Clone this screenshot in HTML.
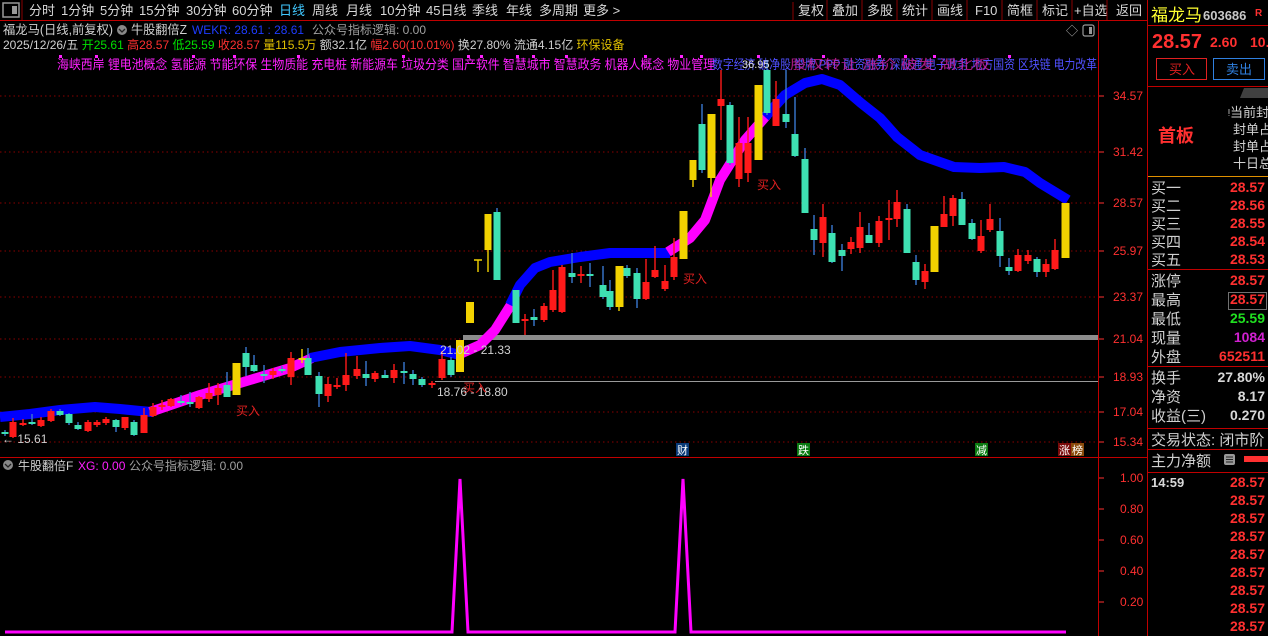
<!DOCTYPE html>
<html><head><meta charset="utf-8"><style>
html,body{margin:0;padding:0;background:#000;width:1268px;height:636px;overflow:hidden}
svg{display:block;font-family:"Liberation Sans","Noto Sans CJK SC",sans-serif}
.r{fill:#ff1a1a}.c{fill:#3ee0b2}.y{fill:#f2d200}
.rw{stroke:#ff1a1a;stroke-width:1.4}.cw{stroke:#3a78d0;stroke-width:1.4}.yw{stroke:#f2d200;stroke-width:1.4}
.g{stroke:#8a0000;stroke-width:1;stroke-dasharray:1.5 3}
.ax{fill:#ff3030;font-size:12px}
.tb{fill:#d8d8d8;font-size:13px}
.rp{font-size:15px;fill:#d0d0d0}
.rv{font-size:14px;font-weight:bold;fill:#ff3030;text-anchor:end}
</style></head><body>
<svg width="1268" height="636" viewBox="0 0 1268 636" xmlns="http://www.w3.org/2000/svg">
<rect x="0" y="0" width="1268" height="20" fill="#000"/>
<rect x="3" y="3" width="16" height="14" fill="none" stroke="#999" stroke-width="1.5"/><rect x="12" y="6" width="5" height="8" fill="#999"/>
<line x1="22" y1="0" x2="22" y2="20" stroke="#8a0000"/>
<g class="tb">
<text x="29" y="15">分时</text><text x="61" y="15">1分钟</text><text x="100" y="15">5分钟</text><text x="139" y="15">15分钟</text><text x="186" y="15">30分钟</text><text x="232" y="15">60分钟</text><text x="279" y="15" fill="#40c8ff">日线</text><text x="312" y="15">周线</text><text x="346" y="15">月线</text><text x="380" y="15">10分钟</text><text x="426" y="15">45日线</text><text x="472" y="15">季线</text><text x="506" y="15">年线</text><text x="539" y="15">多周期</text><text x="583" y="15">更多 &gt;</text>
<text x="798" y="15">复权</text><text x="832" y="15">叠加</text><text x="867" y="15">多股</text><text x="902" y="15">统计</text><text x="937" y="15">画线</text><text x="975" y="15">F10</text><text x="1007" y="15">简框</text><text x="1042" y="15">标记</text><text x="1074" y="15">+自选</text><text x="1116" y="15">返回</text>
</g>
<g stroke="#8a0000"><line x1="793" y1="2" x2="793" y2="20"/><line x1="827" y1="0" x2="827" y2="20"/><line x1="862" y1="0" x2="862" y2="20"/><line x1="897" y1="0" x2="897" y2="20"/><line x1="932" y1="0" x2="932" y2="20"/><line x1="967" y1="0" x2="967" y2="20"/><line x1="1002" y1="0" x2="1002" y2="20"/><line x1="1037" y1="0" x2="1037" y2="20"/><line x1="1072" y1="0" x2="1072" y2="20"/><line x1="1107" y1="0" x2="1107" y2="20"/></g>
<line x1="0" y1="20.5" x2="1148" y2="20.5" stroke="#c00000"/>
<line x1="1098.5" y1="20" x2="1098.5" y2="636" stroke="#c00000"/>
<line x1="1147.5" y1="0" x2="1147.5" y2="636" stroke="#c00000"/>
<line x1="0" y1="457.5" x2="1148" y2="457.5" stroke="#c00000"/>
<g class="g"><line x1="0" y1="96" x2="1097" y2="96"/><line x1="0" y1="152" x2="1097" y2="152"/><line x1="0" y1="203" x2="1097" y2="203"/><line x1="0" y1="251" x2="1097" y2="251"/><line x1="0" y1="297" x2="1097" y2="297"/><line x1="0" y1="339" x2="1097" y2="339"/><line x1="0" y1="377" x2="1097" y2="377"/><line x1="0" y1="412" x2="1097" y2="412"/><line x1="0" y1="442" x2="1097" y2="442"/></g>
<g stroke="#ff3030"><line x1="1099" y1="96" x2="1104" y2="96"/><line x1="1099" y1="152" x2="1104" y2="152"/><line x1="1099" y1="203" x2="1104" y2="203"/><line x1="1099" y1="251" x2="1104" y2="251"/><line x1="1099" y1="297" x2="1104" y2="297"/><line x1="1099" y1="339" x2="1104" y2="339"/><line x1="1099" y1="377" x2="1104" y2="377"/><line x1="1099" y1="412" x2="1104" y2="412"/><line x1="1099" y1="442" x2="1104" y2="442"/>
<line x1="1099" y1="478" x2="1104" y2="478"/><line x1="1099" y1="509" x2="1104" y2="509"/><line x1="1099" y1="540" x2="1104" y2="540"/><line x1="1099" y1="571" x2="1104" y2="571"/><line x1="1099" y1="602" x2="1104" y2="602"/></g>
<g class="ax"><text x="1113" y="100">34.57</text><text x="1113" y="156">31.42</text><text x="1113" y="207">28.57</text><text x="1113" y="255">25.97</text><text x="1113" y="301">23.37</text><text x="1113" y="343">21.04</text><text x="1113" y="381">18.93</text><text x="1113" y="416">17.04</text><text x="1113" y="446">15.34</text>
<text x="1120" y="482">1.00</text><text x="1120" y="513">0.80</text><text x="1120" y="544">0.60</text><text x="1120" y="575">0.40</text><text x="1120" y="606">0.20</text></g>
<text x="3" y="34" font-size="12.5" fill="#d0d0d0" textLength="110" lengthAdjust="spacingAndGlyphs">福龙马(日线,前复权)</text>
<circle cx="122" cy="30" r="5" fill="#888"/><path d="M119 29 l3 3 l3 -3" stroke="#222" fill="none" stroke-width="1.3"/>
<text x="131" y="34" font-size="12.5" fill="#d0d0d0" textLength="56" lengthAdjust="spacingAndGlyphs">牛股翻倍Z</text>
<text x="192" y="34" font-size="12" fill="#1e3cff" textLength="112" lengthAdjust="spacingAndGlyphs">WEKR: 28.61 : 28.61</text>
<text x="312" y="34" font-size="12" fill="#a0a0a0">公众号指标逻辑: 0.00</text>
<text x="1066" y="35" font-size="12" fill="#aaa">◇</text>
<rect x="1083" y="25" width="11" height="11" rx="2" fill="none" stroke="#999" stroke-width="1.2"/><rect x="1089" y="27" width="3" height="7" fill="#999"/>
<text y="49" font-size="12"><tspan x="3" fill="#d0d0d0">2025/12/26/五 </tspan><tspan fill="#00e000">开25.61 </tspan><tspan fill="#ff3030">高28.57 </tspan><tspan fill="#00e000">低25.59 </tspan><tspan fill="#ff3030">收28.57 </tspan><tspan fill="#e0c000">量115.5万 </tspan><tspan fill="#d0d0d0">额32.1亿 </tspan><tspan fill="#ff3030">幅2.60(10.01%) </tspan><tspan fill="#d0d0d0">换27.80% 流通4.15亿 </tspan><tspan fill="#e0c000">环保设备</tspan></text>
<text x="57" y="69" font-size="13" fill="#ff20ff" textLength="658" lengthAdjust="spacingAndGlyphs">海峡西岸 锂电池概念 氢能源 节能环保 生物质能 充电桩 新能源车 垃圾分类 国产软件 智慧城市 智慧政务 机器人概念 物业管理</text>
<text x="712" y="69" font-size="13" fill="#5050ff" textLength="385" lengthAdjust="spacingAndGlyphs">数字经济 破净股 举牌 PPP 融资融券 深股通 电子政务 地方国资 区块链 电力改革</text>
<text x="790" y="69" font-size="13" fill="#d020a0" opacity="0.8" textLength="200" lengthAdjust="spacingAndGlyphs">股权转让 涨价 破发 湖北板</text>
<g fill="#ff20ff"><rect x="59" y="55" width="3" height="3"/><rect x="95" y="55" width="3" height="3"/><rect x="192" y="55" width="3" height="3"/><rect x="233" y="55" width="3" height="3"/><rect x="297" y="55" width="3" height="3"/><rect x="402" y="55" width="3" height="3"/><rect x="467" y="55" width="3" height="3"/><rect x="480" y="55" width="3" height="3"/><rect x="516" y="55" width="3" height="3"/><rect x="532" y="55" width="3" height="3"/><rect x="565" y="55" width="3" height="3"/><rect x="644" y="55" width="3" height="3"/><rect x="680" y="55" width="3" height="3"/><rect x="700" y="55" width="3" height="3"/><rect x="757" y="55" width="3" height="3"/><rect x="822" y="55" width="3" height="3"/><rect x="878" y="55" width="3" height="3"/><rect x="904" y="55" width="3" height="3"/><rect x="933" y="55" width="3" height="3"/><rect x="1008" y="55" width="3" height="3"/></g>
<rect x="463" y="335" width="635" height="5" fill="#8c8c8c"/>
<line x1="435" y1="381.5" x2="1098" y2="381.5" stroke="#9a9a9a"/>
<g fill="none" stroke-width="10" stroke-linejoin="round" stroke-linecap="butt">
<polyline stroke="#0000ff" points="0,417 30,414 60,410 95,407 120,409 140,411 152,412"/>
<polyline stroke="#ff00ff" points="150,412 200,395 250,380 290,368 312,358"/>
<polyline stroke="#0000ff" points="310,358 340,352 380,348 410,346 440,350 464,356"/>
<polyline stroke="#ff00ff" points="462,353 480,345 495,330 512,303"/>
<polyline stroke="#0000ff" points="510,305 520,285 535,268 550,262 580,257 610,253 670,253"/>
<polyline stroke="#ff00ff" points="668,252 690,238 705,220 720,180 745,140 767,115"/>
<polyline stroke="#0000ff" points="765,117 785,95 805,83 822,79 840,85 861,103 880,118 897,137 920,155 954,167 980,168 1004,167 1025,172 1040,183 1068,200"/>
</g>
<path class="cw" d="M5 430V436M32 414V425M60 409V416M69 413V425M78 422V430M116 419V432M134 420V436M181 395V405M190 392V407M227 372V397M246 347V376M254 355V372M264 365V383M282 366V373M308 348V375M319 372V407M366 361V386M385 370V378M404 362V384M413 370V385M422 377V387M451 357V377M497 208V280M516 290V323M534 309V326M572 253V283M590 263V287M603 266V299M610 280V310M627 265V278M637 268V308M702 104V173M730 102V165M767 60V115M786 70V128M795 97V157M805 148V213M814 215V255M832 225V263M842 244V271M869 223V243M907 204V253M916 255V285M962 192V225M972 219V240M1000 218V267M1009 258V275M1037 257V277"/>
<path class="rw" d="M13 418V438M23 419V426M41 417V427M51 409V422M88 420V432M97 420V427M106 417V425M125 417V430M144 408V433M153 403V417M162 400V410M171 398V407M199 396V409M209 383V402M218 383V405M273 368V379M291 352V385M328 377V402M337 378V389M346 353V391M357 356V379M375 371V382M394 364V383M432 381V388M442 351V380M525 314V335M544 303V322M553 270V312M562 265V313M581 266V283M646 259V300M655 246V278M665 265V291M674 238V280M721 70V140M739 117V187M748 117V182M776 81V126M823 204V257M851 237V254M860 212V253M879 216V247M889 200V240M897 190V227M925 264V289M944 196V227M953 195V226M981 220V253M990 204V232M1018 249V272M1028 250V264M1046 259V277M1055 239V270"/>
<path class="yw" d="M302 349V363M488 214V272M619 266V311M693 160V187M711 114V197M474 260H482M478 260V272"/>
<g class="c"><rect x="1.5" y="432" width="7" height="2"/><rect x="28.5" y="422" width="7" height="2"/><rect x="56.5" y="411" width="7" height="4"/><rect x="65.5" y="414" width="7" height="9"/><rect x="74.5" y="425" width="7" height="4"/><rect x="112.5" y="420" width="7" height="7"/><rect x="130.5" y="422" width="7" height="13"/><rect x="177.5" y="401" width="7" height="2"/><rect x="186.5" y="402" width="7" height="2"/><rect x="223.5" y="385" width="7" height="12"/><rect x="242.5" y="353" width="7" height="14"/><rect x="250.5" y="365" width="7" height="6"/><rect x="260.5" y="374" width="7" height="2"/><rect x="278.5" y="369" width="7" height="2"/><rect x="304.5" y="358" width="7" height="17"/><rect x="315.5" y="376" width="7" height="18"/><rect x="362.5" y="374" width="7" height="4"/><rect x="381.5" y="375" width="7" height="3"/><rect x="400.5" y="371" width="7" height="2"/><rect x="409.5" y="374" width="7" height="5"/><rect x="418.5" y="379" width="7" height="6"/><rect x="447.5" y="360" width="7" height="15"/><rect x="493.5" y="212" width="7" height="68"/><rect x="512.5" y="290" width="7" height="33"/><rect x="530.5" y="317" width="7" height="3"/><rect x="568.5" y="273" width="7" height="4"/><rect x="586.5" y="274" width="7" height="2"/><rect x="599.5" y="285" width="7" height="12"/><rect x="606.5" y="291" width="7" height="16"/><rect x="623.5" y="268" width="7" height="8"/><rect x="633.5" y="273" width="7" height="26"/><rect x="698.5" y="124" width="7" height="46"/><rect x="726.5" y="105" width="7" height="58"/><rect x="763.5" y="70" width="7" height="43"/><rect x="782.5" y="114" width="7" height="8"/><rect x="791.5" y="134" width="7" height="22"/><rect x="801.5" y="159" width="7" height="54"/><rect x="810.5" y="229" width="7" height="11"/><rect x="828.5" y="233" width="7" height="29"/><rect x="838.5" y="250" width="7" height="6"/><rect x="865.5" y="235" width="7" height="8"/><rect x="903.5" y="209" width="7" height="44"/><rect x="912.5" y="262" width="7" height="18"/><rect x="958.5" y="199" width="7" height="26"/><rect x="968.5" y="223" width="7" height="16"/><rect x="996.5" y="231" width="7" height="25"/><rect x="1005.5" y="267" width="7" height="4"/><rect x="1033.5" y="259" width="7" height="13"/></g>
<g class="r"><rect x="9.5" y="422" width="7" height="15"/><rect x="19.5" y="423" width="7" height="2"/><rect x="37.5" y="420" width="7" height="6"/><rect x="47.5" y="411" width="7" height="10"/><rect x="84.5" y="422" width="7" height="9"/><rect x="93.5" y="422" width="7" height="3"/><rect x="102.5" y="419" width="7" height="4"/><rect x="121.5" y="417" width="7" height="11"/><rect x="140.5" y="415" width="7" height="18"/><rect x="149.5" y="407" width="7" height="9"/><rect x="158.5" y="405" width="7" height="2"/><rect x="167.5" y="399" width="7" height="7"/><rect x="195.5" y="397" width="7" height="11"/><rect x="205.5" y="393" width="7" height="6"/><rect x="214.5" y="388" width="7" height="7"/><rect x="269.5" y="371" width="7" height="4"/><rect x="287.5" y="358" width="7" height="19"/><rect x="324.5" y="384" width="7" height="12"/><rect x="333.5" y="385" width="7" height="2"/><rect x="342.5" y="375" width="7" height="10"/><rect x="353.5" y="369" width="7" height="7"/><rect x="371.5" y="373" width="7" height="6"/><rect x="390.5" y="370" width="7" height="8"/><rect x="428.5" y="383" width="7" height="2"/><rect x="438.5" y="359" width="7" height="19"/><rect x="521.5" y="319" width="7" height="2"/><rect x="540.5" y="306" width="7" height="14"/><rect x="549.5" y="290" width="7" height="20"/><rect x="558.5" y="267" width="7" height="45"/><rect x="577.5" y="274" width="7" height="2"/><rect x="642.5" y="282" width="7" height="17"/><rect x="651.5" y="270" width="7" height="7"/><rect x="661.5" y="281" width="7" height="8"/><rect x="670.5" y="257" width="7" height="20"/><rect x="717.5" y="99" width="7" height="7"/><rect x="735.5" y="143" width="7" height="36"/><rect x="744.5" y="143" width="7" height="30"/><rect x="772.5" y="99" width="7" height="27"/><rect x="819.5" y="217" width="7" height="26"/><rect x="847.5" y="242" width="7" height="7"/><rect x="856.5" y="227" width="7" height="21"/><rect x="875.5" y="221" width="7" height="22"/><rect x="885.5" y="218" width="7" height="2"/><rect x="893.5" y="202" width="7" height="17"/><rect x="921.5" y="271" width="7" height="11"/><rect x="940.5" y="214" width="7" height="13"/><rect x="949.5" y="198" width="7" height="18"/><rect x="977.5" y="236" width="7" height="15"/><rect x="986.5" y="219" width="7" height="11"/><rect x="1014.5" y="255" width="7" height="16"/><rect x="1024.5" y="255" width="7" height="6"/><rect x="1042.5" y="264" width="7" height="8"/><rect x="1051.5" y="250" width="7" height="19"/></g>
<g class="y"><rect x="232.5" y="363" width="8" height="32"/><rect x="298.5" y="358" width="7" height="2"/><rect x="456" y="340" width="8" height="32"/><rect x="466" y="302" width="8" height="21"/><rect x="484.5" y="214" width="7" height="36"/><rect x="615.5" y="266" width="8" height="41"/><rect x="679.5" y="211" width="8" height="48"/><rect x="689.5" y="160" width="7" height="20"/><rect x="707.5" y="114" width="8" height="64"/><rect x="754.5" y="85" width="8" height="75"/><rect x="930.5" y="226" width="8" height="46"/><rect x="1061.5" y="203" width="8" height="55"/></g>
<text x="236" y="415" font-size="12" fill="#e02020">买入</text>
<text x="683" y="283" font-size="12" fill="#e02020">买入</text>
<text x="757" y="189" font-size="12" fill="#e02020">买入</text>
<text x="463" y="392" font-size="12" fill="#e02020">买入</text>
<text x="440" y="354" font-size="12" fill="#d0d0d0">21.02 - 21.33</text>
<text x="437" y="396" font-size="12" fill="#d0d0d0">18.76 - 18.80</text>
<text x="2" y="443" font-size="12" fill="#d0d0d0">← 15.61</text>
<text x="742" y="68" font-size="11" fill="#e0e0e0">36.95</text>
<rect x="676" y="443" width="13" height="13" fill="#0a3a78"/><text x="677" y="454" font-size="11" fill="#fff">财</text>
<rect x="797" y="443" width="13" height="13" fill="#0a7a10"/><text x="798" y="454" font-size="11" fill="#fff">跌</text>
<rect x="975" y="443" width="13" height="13" fill="#0a7a10"/><text x="976" y="454" font-size="11" fill="#fff">减</text>
<rect x="1058" y="443" width="13" height="13" fill="#7a0a0a"/><text x="1059" y="454" font-size="11" fill="#fff">涨</text>
<rect x="1071" y="443" width="13" height="13" fill="#8a4a0a"/><text x="1072" y="454" font-size="11" fill="#fff">榜</text>
<circle cx="8" cy="465" r="5" fill="#888"/><path d="M5 464 l3 3 l3 -3" stroke="#222" fill="none" stroke-width="1.3"/>
<text x="18" y="470" font-size="12" fill="#d0d0d0">牛股翻倍F</text>
<text x="78" y="470" font-size="12" fill="#ff20ff">XG: 0.00</text>
<text x="129" y="470" font-size="12" fill="#a0a0a0">公众号指标逻辑: 0.00</text>
<polyline fill="none" stroke="#ff00ff" stroke-width="3" points="5,632 452,632 460,479 468,632 675,632 683,479 691,632 1066,632"/>
<text x="1151" y="21" font-size="17" fill="#ffff30">福龙马</text>
<text x="1203" y="20" font-size="13" fill="#c8c8c8" font-weight="bold">603686</text>
<text x="1255" y="16" font-size="10" fill="#ff3030" font-weight="bold">R</text>
<line x1="1148" y1="25.5" x2="1268" y2="25.5" stroke="#c00000"/>
<text x="1152" y="48" font-size="20" font-weight="bold" fill="#ff3030">28.57</text>
<text x="1210" y="47" font-size="14" font-weight="bold" fill="#ff3030">2.60</text>
<text x="1250" y="47" font-size="14" font-weight="bold" fill="#ff3030">10.0</text>
<rect x="1156.5" y="58.5" width="50" height="21" fill="none" stroke="#e02020"/><text x="1169" y="74" font-size="13" fill="#e02020">买入</text>
<rect x="1213.5" y="58.5" width="51" height="21" fill="none" stroke="#3080e0"/><text x="1226" y="74" font-size="13" fill="#3080e0">卖出</text>
<line x1="1148" y1="86.5" x2="1268" y2="86.5" stroke="#c00000"/>
<text x="1158" y="142" font-size="18" font-weight="bold" fill="#ff3030">首板</text>
<text x="1228" y="117" font-size="13" fill="#d0d0d0">ᵎ当前封</text>
<text x="1233" y="134" font-size="13" fill="#d0d0d0">封单占</text>
<text x="1233" y="151" font-size="13" fill="#d0d0d0">封单占</text>
<text x="1233" y="168" font-size="13" fill="#d0d0d0">十日总</text>
<line x1="1148" y1="176.5" x2="1268" y2="176.5" stroke="#e09000"/>
<g class="rp"><text x="1151" y="193">买一</text><text x="1151" y="211">买二</text><text x="1151" y="229">买三</text><text x="1151" y="247">买四</text><text x="1151" y="265">买五</text>
<text x="1151" y="286">涨停</text><text x="1151" y="305">最高</text><text x="1151" y="324">最低</text><text x="1151" y="343">现量</text><text x="1151" y="362">外盘</text>
<text x="1151" y="383">换手</text><text x="1151" y="402">净资</text><text x="1151" y="421">收益(三)</text>
<text x="1151" y="445">交易状态: 闭市阶</text><text x="1151" y="466">主力净额</text></g>
<g class="rv"><text x="1265" y="192">28.57</text><text x="1265" y="210">28.56</text><text x="1265" y="228">28.55</text><text x="1265" y="246">28.54</text><text x="1265" y="264">28.53</text>
<text x="1265" y="285">28.57</text><text x="1265" y="304">28.57</text><text x="1265" y="323" fill="#20e020">25.59</text><text x="1265" y="342" fill="#d020d0">1084</text><text x="1265" y="361">652511</text>
<text x="1265" y="382" fill="#d8d8d8">27.80%</text><text x="1265" y="401" fill="#d8d8d8">8.17</text><text x="1265" y="420" fill="#d8d8d8">0.270</text>
<text x="1265" y="487">28.57</text><text x="1265" y="505">28.57</text><text x="1265" y="523">28.57</text><text x="1265" y="541">28.57</text><text x="1265" y="559">28.57</text><text x="1265" y="577">28.57</text><text x="1265" y="595">28.57</text><text x="1265" y="613">28.57</text><text x="1265" y="631">28.57</text></g>
<rect x="1228.5" y="292.5" width="38" height="17" fill="none" stroke="#707070"/>
<line x1="1148" y1="269.5" x2="1268" y2="269.5" stroke="#c00000"/>
<line x1="1148" y1="366.5" x2="1268" y2="366.5" stroke="#c00000"/>
<line x1="1148" y1="428.5" x2="1268" y2="428.5" stroke="#c00000"/>
<line x1="1148" y1="449.5" x2="1268" y2="449.5" stroke="#c00000"/>
<line x1="1148" y1="472.5" x2="1268" y2="472.5" stroke="#c00000"/>
<rect x="1224" y="454" width="11" height="11" rx="2" fill="#999"/><g stroke="#222"><line x1="1226" y1="457" x2="1233" y2="457"/><line x1="1226" y1="459.5" x2="1233" y2="459.5"/><line x1="1226" y1="462" x2="1233" y2="462"/></g>
<rect x="1244" y="456" width="24" height="6" fill="#ff3030"/>
<text x="1151" y="487" font-size="13" font-weight="bold" fill="#d8d8d8">14:59</text>
<path d="M1244 88 h24 v10 h-28 z" fill="#404040"/>
</svg>
</body></html>
